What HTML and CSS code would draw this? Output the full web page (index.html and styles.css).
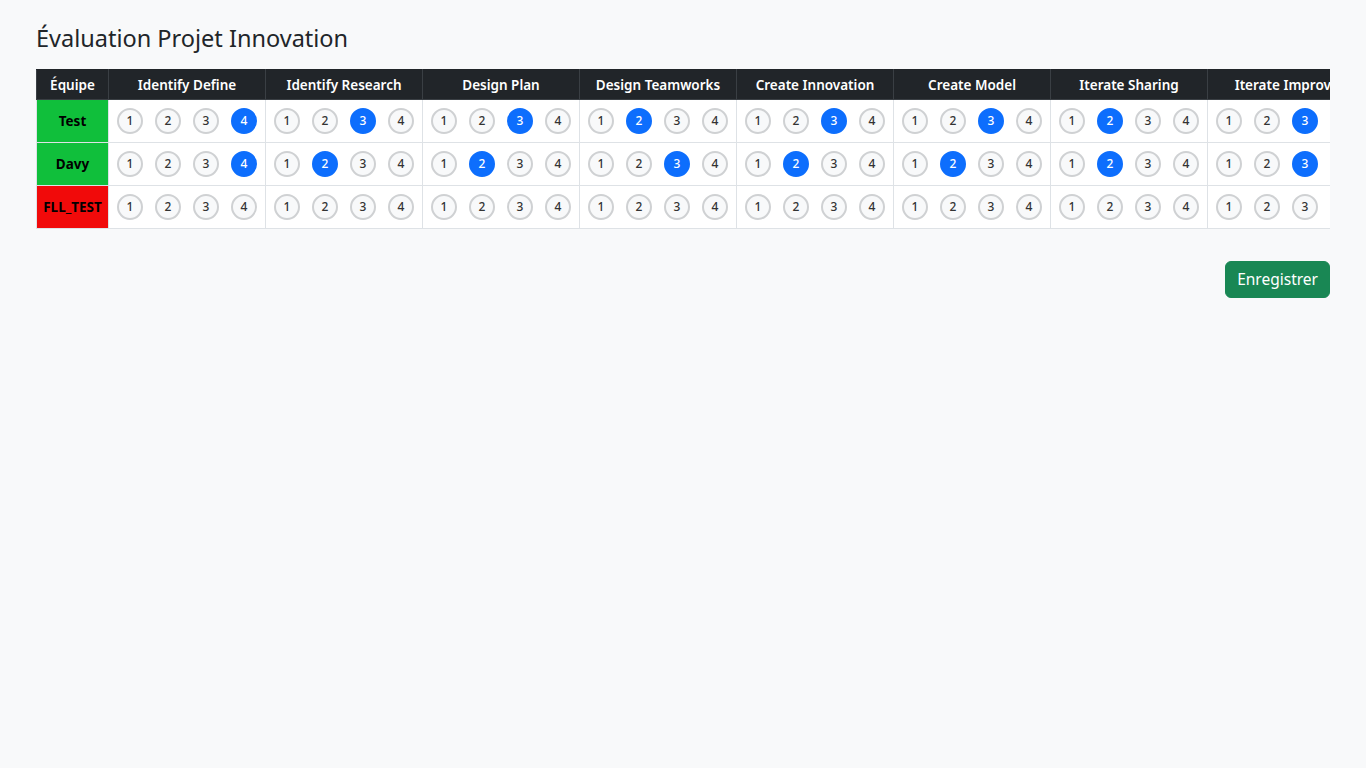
FILE: index.html
```html
<!DOCTYPE html>
<html lang="fr">
<head>
<meta charset="utf-8">
<title>Évaluation Projet Innovation</title>
<link rel="stylesheet" href="styles.css">
</head>
<body>
<div class="page">
  <h1 class="title">Évaluation Projet Innovation</h1>
  <div class="table-wrap">
    <table class="grid">
      <thead>
        <tr>
          <th class="team-col">Équipe</th>
          <th class="crit">Identify Define</th>
          <th class="crit">Identify Research</th>
          <th class="crit">Design Plan</th>
          <th class="crit">Design Teamworks</th>
          <th class="crit">Create Innovation</th>
          <th class="crit">Create Model</th>
          <th class="crit">Iterate Sharing</th>
          <th class="crit wide">Iterate Improvements</th>
        </tr>
      </thead>
      <tbody>
        <tr>
          <td class="team ok">Test</td>
          <td><div class="dots"><span class="dot">1</span><span class="dot">2</span><span class="dot">3</span><span class="dot on">4</span></div></td>
          <td><div class="dots"><span class="dot">1</span><span class="dot">2</span><span class="dot on">3</span><span class="dot">4</span></div></td>
          <td><div class="dots"><span class="dot">1</span><span class="dot">2</span><span class="dot on">3</span><span class="dot">4</span></div></td>
          <td><div class="dots"><span class="dot">1</span><span class="dot on">2</span><span class="dot">3</span><span class="dot">4</span></div></td>
          <td><div class="dots"><span class="dot">1</span><span class="dot">2</span><span class="dot on">3</span><span class="dot">4</span></div></td>
          <td><div class="dots"><span class="dot">1</span><span class="dot">2</span><span class="dot on">3</span><span class="dot">4</span></div></td>
          <td><div class="dots"><span class="dot">1</span><span class="dot on">2</span><span class="dot">3</span><span class="dot">4</span></div></td>
          <td><div class="dots"><span class="dot">1</span><span class="dot">2</span><span class="dot on">3</span><span class="dot">4</span></div></td>
        </tr>
        <tr>
          <td class="team ok">Davy</td>
          <td><div class="dots"><span class="dot">1</span><span class="dot">2</span><span class="dot">3</span><span class="dot on">4</span></div></td>
          <td><div class="dots"><span class="dot">1</span><span class="dot on">2</span><span class="dot">3</span><span class="dot">4</span></div></td>
          <td><div class="dots"><span class="dot">1</span><span class="dot on">2</span><span class="dot">3</span><span class="dot">4</span></div></td>
          <td><div class="dots"><span class="dot">1</span><span class="dot">2</span><span class="dot on">3</span><span class="dot">4</span></div></td>
          <td><div class="dots"><span class="dot">1</span><span class="dot on">2</span><span class="dot">3</span><span class="dot">4</span></div></td>
          <td><div class="dots"><span class="dot">1</span><span class="dot on">2</span><span class="dot">3</span><span class="dot">4</span></div></td>
          <td><div class="dots"><span class="dot">1</span><span class="dot on">2</span><span class="dot">3</span><span class="dot">4</span></div></td>
          <td><div class="dots"><span class="dot">1</span><span class="dot">2</span><span class="dot on">3</span><span class="dot">4</span></div></td>
        </tr>
        <tr>
          <td class="team ko">FLL_TEST</td>
          <td><div class="dots"><span class="dot">1</span><span class="dot">2</span><span class="dot">3</span><span class="dot">4</span></div></td>
          <td><div class="dots"><span class="dot">1</span><span class="dot">2</span><span class="dot">3</span><span class="dot">4</span></div></td>
          <td><div class="dots"><span class="dot">1</span><span class="dot">2</span><span class="dot">3</span><span class="dot">4</span></div></td>
          <td><div class="dots"><span class="dot">1</span><span class="dot">2</span><span class="dot">3</span><span class="dot">4</span></div></td>
          <td><div class="dots"><span class="dot">1</span><span class="dot">2</span><span class="dot">3</span><span class="dot">4</span></div></td>
          <td><div class="dots"><span class="dot">1</span><span class="dot">2</span><span class="dot">3</span><span class="dot">4</span></div></td>
          <td><div class="dots"><span class="dot">1</span><span class="dot">2</span><span class="dot">3</span><span class="dot">4</span></div></td>
          <td><div class="dots"><span class="dot">1</span><span class="dot">2</span><span class="dot">3</span><span class="dot">4</span></div></td>
        </tr>
      </tbody>
    </table>
  </div>
  <div class="actions">
    <button class="btn-save" type="button">Enregistrer</button>
  </div>
</div>
</body>
</html>
```
FILE: styles.css
```css
* { box-sizing: border-box; }
html, body { margin: 0; padding: 0; }
body {
  background: #f8f9fa;
  color: #212529;
  font-family: "Noto Sans", "Open Sans", "DejaVu Sans", sans-serif;
  font-size: 16px;
}
.page {
  padding: 21px 36px 0 36px;
}
.title {
  margin: 0 0 14px 0;
  font-size: 23.5px;
  font-weight: 400;
  line-height: 34px;
  color: #212529;
}
.table-wrap {
  width: 1294px;
  overflow: hidden;
}
.grid {
  border-collapse: collapse;
  table-layout: fixed;
  background: #fff;
  width: max-content;
}
.grid th {
  background: #212529;
  color: #fff;
  font-size: 13.5px;
  font-weight: 600;
  height: 30px;
  padding: 0 8px;
  text-align: center;
  white-space: nowrap;
  border: 1px solid #3a3f44;
  border-top-color: #212529;
}
.grid th.team-col { width: 72px; }
.grid th.crit { width: 157px; }
.grid th.crit.wide { width: 200px; }
.grid td {
  border: 1px solid #dee2e6;
  padding: 8px;
  height: 43px;
  vertical-align: middle;
}
.grid td.team {
  font-size: 13.5px;
  font-weight: 700;
  color: #000;
  text-align: center;
  padding: 0 2px;
  white-space: nowrap;
}
.team.ok { background: #10bf3b; }
.team.ko { background: #f10a0a; }
.dots {
  display: flex;
  gap: 12px;
}
.dot {
  width: 26px;
  height: 26px;
  flex: none;
  border-radius: 50%;
  border: 2px solid #cfd1d3;
  background: #f8f9fa;
  color: #333;
  font-size: 12px;
  font-weight: 500;
  display: flex;
  align-items: center;
  justify-content: center;
  line-height: 1;
}
.dot.on {
  background: #0d6efd;
  border-color: #0d6efd;
  color: #fff;
}
.actions {
  display: flex;
  justify-content: flex-end;
  margin-top: 32px;
}
.btn-save {
  background: #198754;
  color: #fff;
  border: 1px solid #198754;
  border-radius: 6px;
  font-family: inherit;
  font-size: 15.5px;
  padding: 0 11px;
  height: 37px;
  line-height: 35px;
}
```
